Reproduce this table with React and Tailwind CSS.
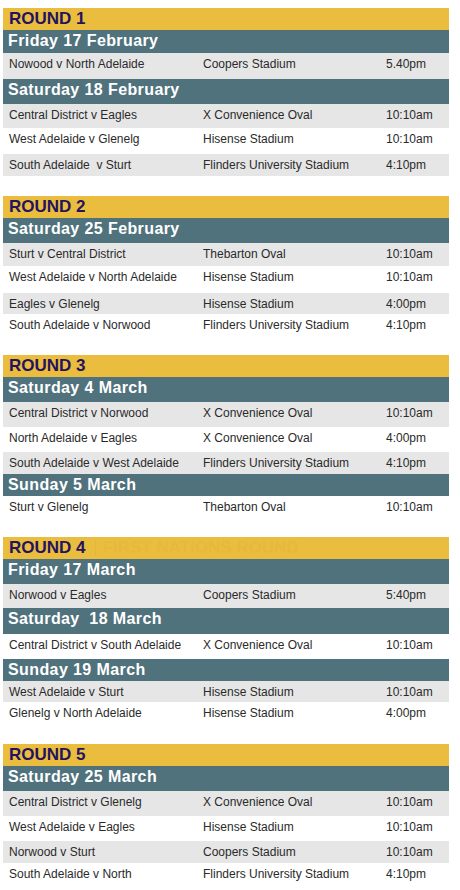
import React from "react";

const FONT = { fontFamily: '"Liberation Sans", Arial, sans-serif' };

const rounds = [
  {
    title: "ROUND 1",
    wrap: "pt-[8px]",
    items: [
      { t: "h", h: "h-[23px]", text: "Friday 17 February" },
      { t: "r", h: "h-[26px]", bg: "bg-[#e6e6e6]", a: "Nowood v North Adelaide", b: "Coopers Stadium", c: "5.40pm" },
      { t: "h", h: "h-[25px]", text: "Saturday 18 February" },
      { t: "r", h: "h-[24px]", bg: "bg-[#e6e6e6]", a: "Central District v Eagles", b: "X Convenience Oval", c: "10:10am" },
      { t: "r", h: "h-[26px]", bg: "bg-white", a: "West Adelaide v Glenelg", b: "Hisense Stadium", c: "10:10am" },
      { t: "r", h: "h-[22px]", bg: "bg-[#e6e6e6]", a: "South Adelaide  v Sturt", b: "Flinders University Stadium", c: "4:10pm" },
    ],
  },
  {
    title: "ROUND 2",
    wrap: "pt-[20px]",
    items: [
      { t: "h", h: "h-[25px]", text: "Saturday 25 February" },
      { t: "r", h: "h-[23px]", bg: "bg-[#e6e6e6]", a: "Sturt v Central District", b: "Thebarton Oval", c: "10:10am" },
      { t: "r", h: "h-[27px]", bg: "bg-white", a: "West Adelaide v North Adelaide", b: "Hisense Stadium", c: "10:10am" },
      { t: "r", h: "h-[21px]", bg: "bg-[#e6e6e6]", a: "Eagles v Glenelg", b: "Hisense Stadium", c: "4:00pm" },
      { t: "r", h: "h-[22px]", bg: "bg-white", a: "South Adelaide v Norwood", b: "Flinders University Stadium", c: "4:10pm" },
    ],
  },
  {
    title: "ROUND 3",
    wrap: "pt-[19px]",
    items: [
      { t: "h", h: "h-[25px]", text: "Saturday 4 March" },
      { t: "r", h: "h-[25px]", bg: "bg-[#e6e6e6]", a: "Central District v Norwood", b: "X Convenience Oval", c: "10:10am" },
      { t: "r", h: "h-[25px]", bg: "bg-white", a: "North Adelaide v Eagles", b: "X Convenience Oval", c: "4:00pm" },
      { t: "r", h: "h-[22px]", bg: "bg-[#e6e6e6]", a: "South Adelaide v West Adelaide", b: "Flinders University Stadium", c: "4:10pm" },
      { t: "h", h: "h-[22px]", text: "Sunday 5 March" },
      { t: "r", h: "h-[22px]", bg: "bg-white", a: "Sturt v Glenelg", b: "Thebarton Oval", c: "10:10am" },
    ],
  },
  {
    title: "ROUND 4",
    extra: "FIRST NATIONS ROUND",
    wrap: "pt-[19px]",
    items: [
      { t: "h", h: "h-[25px]", text: "Friday 17 March" },
      { t: "r", h: "h-[24px]", bg: "bg-[#e6e6e6]", a: "Norwood v Eagles", b: "Coopers Stadium", c: "5:40pm" },
      { t: "h", h: "h-[26px]", text: "Saturday  18 March" },
      { t: "r", h: "h-[25px]", bg: "bg-white", a: "Central District v South Adelaide", b: "X Convenience Oval", c: "10:10am" },
      { t: "h", h: "h-[22px]", text: "Sunday 19 March" },
      { t: "r", h: "h-[21px]", bg: "bg-[#e6e6e6]", a: "West Adelaide v Sturt", b: "Hisense Stadium", c: "10:10am" },
      { t: "r", h: "h-[20px]", bg: "bg-white", a: "Glenelg v North Adelaide", b: "Hisense Stadium", c: "4:00pm" },
    ],
  },
  {
    title: "ROUND 5",
    wrap: "pt-[22px]",
    items: [
      { t: "h", h: "h-[25px]", text: "Saturday 25 March" },
      { t: "r", h: "h-[25px]", bg: "bg-[#e6e6e6]", a: "Central District v Glenelg", b: "X Convenience Oval", c: "10:10am" },
      { t: "r", h: "h-[25px]", bg: "bg-white", a: "West Adelaide v Eagles", b: "Hisense Stadium", c: "10:10am" },
      { t: "r", h: "h-[22px]", bg: "bg-[#e6e6e6]", a: "Norwood v Sturt", b: "Coopers Stadium", c: "10:10am" },
      { t: "r", h: "h-[22px]", bg: "bg-white", a: "South Adelaide v North", b: "Flinders University Stadium", c: "4:10pm" },
    ],
  },
];

function Header({ h, text }) {
  return (
    <div className={`${h} bg-[#50727d] pl-[5px] flex items-start`}>
      <span className="text-white font-bold text-[16px] leading-[21px] tracking-[0.4px] whitespace-pre">
        {text}
      </span>
    </div>
  );
}

function Row({ h, bg, a, b, c }) {
  return (
    <div className={`${h} ${bg} flex items-start pt-[3px] text-[12px] leading-[16px] text-[#2a2a2a]`}>
      <div className="w-[200px] pl-[6px] whitespace-pre">{a}</div>
      <div className="w-[183px] whitespace-pre">{b}</div>
      <div className="whitespace-pre">{c}</div>
    </div>
  );
}

function Round({ r }) {
  return (
    <div className={r.wrap}>
      <div className="h-[22px] bg-[#ebbd3f] pl-[6px] flex items-center">
        <span className="text-[#24135f] font-bold text-[17px] leading-[22px]">{r.title}</span>
        {r.extra && (
          <>
            <span className="ml-[9px] w-[1px] h-[16px] bg-[#e3b53a]" />
            <span className="ml-[7px] text-[#e6b93c] font-bold text-[17px] leading-[22px]">{r.extra}</span>
          </>
        )}
      </div>
      {r.items.map((it, i) =>
        it.t === "h" ? <Header key={i} {...it} /> : <Row key={i} {...it} />
      )}
    </div>
  );
}

export default function App() {
  return (
    <div className="w-[460px] h-[890px] bg-white overflow-hidden" style={FONT}>
      <div className="ml-[3px] w-[446px]">
        {rounds.map((r, i) => (
          <Round key={i} r={r} />
        ))}
      </div>
    </div>
  );
}
